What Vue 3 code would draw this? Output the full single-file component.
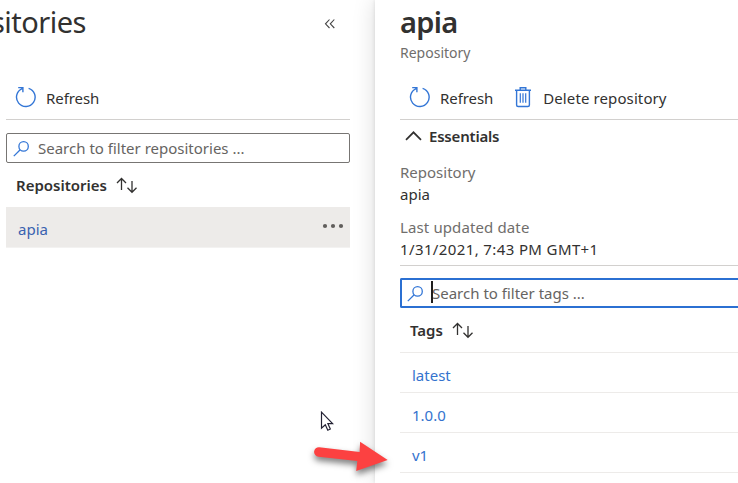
<script setup>
const tags = ['latest', '1.0.0', 'v1']
</script>

<template>
  <div class="screen">
    <section class="list-pane">
      <header class="list-head">
        <h1><span class="t-title">Repositories</span></h1>
        <svg class="collapse" width="12" height="12" viewBox="0 0 12 12"><path d="M5.5 1.5 1.5 5.8l4 4.2M10.3 1.5 6.3 5.8l4 4.2" /></svg>
      </header>
      <div class="toolbar">
        <svg class="refresh" width="22" height="22" viewBox="0 0 22 22"><path d="M13.6 2.3A9.3 9.3 0 1 1 7.2 2.6M3.2 1.6H7.9V6.3" /></svg>
        <span class="t-refresh">Refresh</span>
      </div>
      <div class="search">
        <svg class="glass" width="17" height="17" viewBox="0 0 17 17"><circle cx="10.6" cy="6.4" r="4.7" /><path d="M7.2 9.8.8 16.1" /></svg>
        <span class="t-search1">Search to filter repositories ...</span>
      </div>
      <div class="column-head">
        <b class="t-repos">Repositories</b>
        <svg class="sort" width="22" height="17" viewBox="0 0 22 17"><path d="M5.5 13V1.6M1 6l4.5-4.5L10 6M16 4v11.3M11.5 10.8l4.5 4.5 4.5-4.5" /></svg>
      </div>
      <div class="repo-row">
        <a class="t-apia">apia</a>
        <svg class="dots" width="22" height="6" viewBox="0 0 22 6"><circle cx="3" cy="3" r="2.1" /><circle cx="11" cy="3" r="2.1" /><circle cx="19" cy="3" r="2.1" /></svg>
      </div>
    </section>

    <section class="detail-pane">
      <h2><span class="t-name">apia</span></h2>
      <div class="subtitle"><span class="t-sub">Repository</span></div>
      <div class="toolbar detail-tools">
        <svg class="refresh" width="22" height="22" viewBox="0 0 22 22"><path d="M13.6 2.3A9.3 9.3 0 1 1 7.2 2.6M3.2 1.6H7.9V6.3" /></svg>
        <span class="t-refresh">Refresh</span>
        <svg class="trash" width="18" height="22" viewBox="0 0 18 22"><path d="M1 4.2h16M6.2 4V1.7h5.6V4M2.6 4.5V19q0 1.5 1.5 1.5h9.8q1.5 0 1.5-1.5V4.5" /><path class="bars" d="M6.3 7.2v9.6M9 7.2v9.6M11.7 7.2v9.6" /></svg>
        <span class="t-delete">Delete repository</span>
      </div>
      <div class="essentials">
        <svg class="chevron" width="17" height="10" viewBox="0 0 17 10"><path d="M1 8.8 8.5 1.3 16 8.8" /></svg>
        <b class="t-ess">Essentials</b>
      </div>
      <dl>
        <dt><span class="t-label">Repository</span></dt>
        <dd><span class="t-value">apia</span></dd>
        <dt class="second"><span class="t-updated">Last updated date</span></dt>
        <dd><span class="t-date">1/31/2021, 7:43 PM GMT+1</span></dd>
      </dl>
      <div class="search focused">
        <svg class="glass" width="17" height="17" viewBox="0 0 17 17"><circle cx="10.6" cy="6.4" r="4.7" /><path d="M7.2 9.8.8 16.1" /></svg>
        <i class="caret"></i>
        <span class="t-search2">Search to filter tags ...</span>
      </div>
      <div class="column-head tags-head">
        <b class="t-tags">Tags</b>
        <svg class="sort" width="22" height="17" viewBox="0 0 22 17"><path d="M5.5 13V1.6M1 6l4.5-4.5L10 6M16 4v11.3M11.5 10.8l4.5 4.5 4.5-4.5" /></svg>
      </div>
      <div v-for="tag in tags" :key="tag" class="tag-row"><a class="t-tag">{{ tag }}</a></div>
    </section>

    <svg class="pointer" width="14" height="21" viewBox="0 0 14 21"><path d="M1.5 1.2V17.2L5.3 13.7 7.8 19.2 10.3 18 7.9 12.7H12.6Z" /></svg>
    <svg class="arrow" width="90" height="50" viewBox="0 0 90 50"><path d="M9.3 9.2 49.6 14 50.1 3.8 77.7 21.9 46.2 33 47.3 22.9 8.5 18.8A4.8 4.8 0 0 1 9.3 9.2Z" /></svg>
  </div>
</template>

<style>
body { margin: 0; overflow: hidden; background: #fff; }
</style>

<style scoped>
* { box-sizing: border-box; }
.screen { position: relative; display: flex; width: 738px; height: 483px; overflow: hidden; background: #fff; color: #323130; font: 15px/22px "Noto Sans", "Open Sans", sans-serif; white-space: nowrap; }
h1, h2, dl, dt, dd { margin: 0; font-weight: 400; }
b { font-weight: 600; }
svg { flex: none; fill: none; stroke-width: 1.4; }
.list-pane { width: 375px; padding: 0 25px 0 6px; }
.list-head { display: flex; justify-content: space-between; height: 77px; margin-left: -6px; }
h1 { display: flex; justify-content: flex-end; width: 86px; height: 44px; overflow: hidden; font-size: 29px; line-height: 44px; letter-spacing: -.5px; }
.collapse { margin: 18px 14px 0 0; stroke: #444; stroke-width: 1.1; }
.toolbar { display: flex; align-items: center; height: 43px; padding-left: 9px; border-bottom: 1px solid #d2d0ce; }
.refresh { margin: -2px 9px 0 0; stroke: #3376d6; }
.search { display: flex; align-items: center; height: 30px; margin-top: 13px; padding-left: 7px; border: 1px solid #777573; border-radius: 2px; color: #666462; }
.glass { margin: 0 8px 0 -1px; stroke: #3376d6; stroke-width: 1.3; }
.column-head { display: flex; align-items: center; height: 44px; padding-left: 10px; }
.sort { margin-left: 9px; stroke: #323130; stroke-width: 1.3; }
.repo-row { display: flex; align-items: center; justify-content: space-between; height: 41px; padding: 3px 6px 0 12px; background: #edebe9; border-bottom: 1px solid #f3f2f1; }
.repo-row a { color: #3a62b0; }
.dots { margin-top: -6px; fill: #605e5c; }
.detail-pane { width: 363px; padding-left: 25px; background: #fff; box-shadow: 0 0 22px rgba(0, 0, 0, .14), 0 0 4px rgba(0, 0, 0, .11); }
h2 { height: 42px; font-size: 29px; font-weight: 600; line-height: 44px; letter-spacing: -.7px; }
.subtitle { height: 35px; font-size: 14px; line-height: 21px; color: #706e6c; }
.trash { margin: -2px 11px 0 21px; stroke: #3376d6; }
.trash .bars { stroke-width: 1.2; }
.t-refresh { letter-spacing: -.08px; }
.t-delete { letter-spacing: .11px; }
.essentials { display: flex; align-items: center; height: 31px; padding-left: 5px; }
.t-ess { letter-spacing: -.2px; }
.chevron { margin-right: 7px; stroke: #323130; stroke-width: 1.7; }
dl { height: 115px; padding-top: 10px; border-bottom: 1px solid #d2d0ce; }
dt { color: #706e6c; }
.t-updated { letter-spacing: .12px; }
.t-date { letter-spacing: .38px; }
.second { margin-top: 11px; }
.focused { position: relative; height: 30px; margin-top: 12px; padding-left: 6px; border: 2px solid #2b70d2; border-right: 0; border-radius: 2px 0 0 2px; }
.caret { position: absolute; left: 29px; top: 1px; width: 2px; height: 22px; background: #201f1e; }
.tags-head { height: 45px; border-bottom: 1px solid #edebe9; }
.tag-row { display: flex; align-items: center; height: 40px; padding: 5px 0 0 12px; border-bottom: 1px solid #edebe9; }
.tag-row a { color: #3473ce; }
.pointer { position: absolute; left: 320px; top: 411px; fill: #fff; stroke: #222133; stroke-width: 1.2; }
.arrow { position: absolute; left: 310px; top: 438px; fill: #fc4141; filter: drop-shadow(0 4px 3px rgba(0, 0, 0, .5)); }
</style>
